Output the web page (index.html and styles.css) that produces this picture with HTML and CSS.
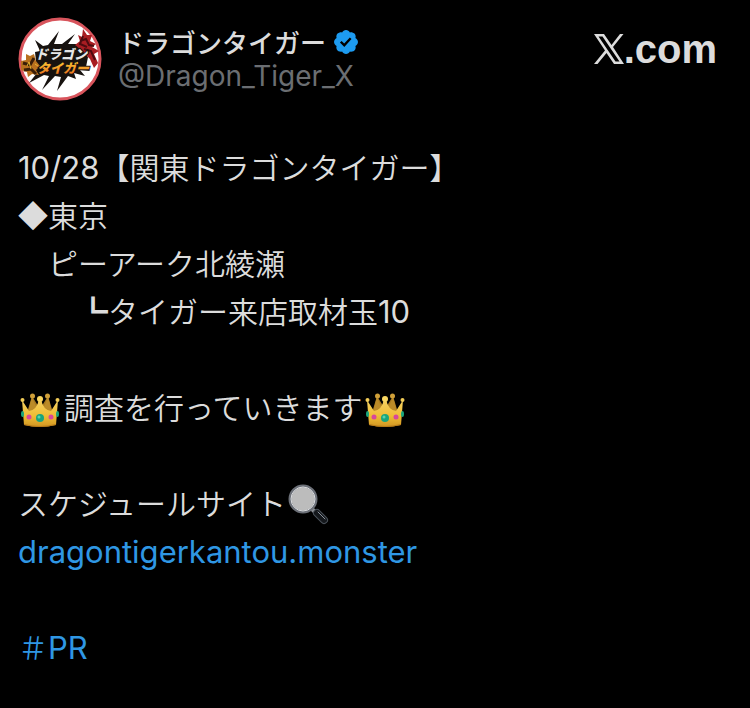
FILE: index.html
```html
<!DOCTYPE html>
<html lang="ja">
<head>
    <meta charset="UTF-8">
    <meta name="viewport" content="width=device-width, initial-scale=1.0">
    <title>ドラゴンタイガー</title>
    <link rel="stylesheet" href="styles.css">
</head>
<body>
    <!-- shared emoji shapes -->
    <svg class="defs" width="0" height="0" aria-hidden="true">
        <defs>
            <linearGradient id="gold" x1="0" y1="0" x2="0" y2="1">
                <stop offset="0" stop-color="#f6d264"/>
                <stop offset="0.6" stop-color="#efbd35"/>
                <stop offset="1" stop-color="#d09522"/>
            </linearGradient>
            <linearGradient id="fire" x1="0" y1="0" x2="0" y2="1">
                <stop offset="0" stop-color="#ffe03a"/>
                <stop offset="1" stop-color="#e8611a"/>
            </linearGradient>
            <symbol id="crown" viewBox="0 0 40 36">
                <path d="M6 24 12 4 20 17 28 4 34 24Z" fill="#a97b1f"/>
                <path d="M8 20 12 5l6 14M32 20 28 5l-6 14" fill="#bb8b28"/>
                <circle cx="12.500" cy="4" r="2.500" fill="#cf9f38"/>
                <circle cx="27.500" cy="4" r="2.500" fill="#cf9f38"/>
                <path d="M2 8 9 19q8-1 10-12h2q2 11 10 12l7-11-2 25q-16 4-32 0Z" fill="url(#gold)"/>
                <circle cx="20" cy="7" r="3" fill="#f9d762"/>
                <circle cx="2.500" cy="8" r="2" fill="#f3cd58"/>
                <circle cx="37.500" cy="8" r="2" fill="#f3cd58"/>
                <path d="M4 32q16 4 32 0v1q-16 4-32 0Z" fill="#b77a18"/>
                <circle cx="20" cy="26" r="4" fill="#19a57c"/>
                <circle cx="19" cy="25" r="1.500" fill="#58d3ac"/>
                <circle cx="9" cy="25" r="2.500" fill="#d8479b"/>
                <circle cx="31" cy="25" r="2.500" fill="#d8479b"/>
                <ellipse cx="2.500" cy="22" rx="1.500" ry="3" fill="#19a57c"/>
                <ellipse cx="37.500" cy="22" rx="1.500" ry="3" fill="#19a57c"/>
            </symbol>
        </defs>
    </svg>

    <main class="post">
        <header class="post-header">
            <svg class="avatar" viewBox="0 0 84 84" role="img" aria-label="ドラゴンタイガー">
                <circle cx="42" cy="42" r="40" fill="#fff" stroke="#d8545c" stroke-width="3"/>
                <path d="M17 23 25 29 30 28 41 14 36 27 44 27 57 17 50 27 60 27 70 40 68 50 72 54 62 53 67 59 56 56 58 62 50 59 39 74 43 60 37 59 24 73 31 59 26 58 11 66 19 56 9 51 18 44 17 35 22 34Z" fill="#17120f"/>
                <path d="M57 28 62 24 60 18 64 20 65 12 69 18 74 18 72 24 78 27 74 30 81 34 76 37 80 46 76 51 72 42 66 36 62 32Z" fill="#a81d22"/>
                <path d="M62 24 68 22 71 28 76 29M66 32 73 34 77 43M65 19 62 27 69 30" fill="none" stroke="#4d0b10" stroke-width="2"/>
                <path d="M3 44 8 43 8 37 12 39 16 37 18 44 22 49 18 53 21 58 14 57 10 60 9 55 3 53Z" fill="#b8711f"/>
                <path d="M5 46 12 48 16 41M6 53 13 52 18 57" fill="none" stroke="#3a1e08" stroke-width="3"/>
                <path d="M9 49 11 45 13 52M17 47 20 49" fill="none" stroke="#e9b52e"/>
                <g class="avatar-logo">
                    <text x="17" y="42" font-size="13" fill="#e6e6e6">ドラゴン</text>
                    <text x="19" y="56" font-size="13" fill="url(#fire)">タイガー</text>
                </g>
            </svg>

            <div class="author">
                <div class="author-name">
                    <span>ドラゴンタイガー</span>
                    <svg class="badge" viewBox="0 0 22 22" role="img" aria-label="認証済み">
                        <path fill="#1d9bf0" d="M20.396 11c-.018-.646-.215-1.275-.57-1.816-.354-.54-.852-.972-1.438-1.246.223-.607.27-1.264.14-1.897-.131-.634-.437-1.218-.882-1.687-.47-.445-1.053-.75-1.687-.882-.633-.13-1.29-.083-1.897.14-.273-.587-.704-1.086-1.245-1.44S11.647 1.620 11 1.604c-.646.017-1.273.213-1.813.568s-.969.854-1.240 1.440c-.608-.223-1.267-.272-1.902-.14-.635.130-1.220.436-1.690.882-.445.470-.749 1.055-.878 1.688-.130.633-.080 1.290.144 1.896-.587.274-1.087.705-1.443 1.245-.356.540-.555 1.170-.574 1.817.020.647.218 1.276.574 1.817.356.540.856.972 1.443 1.245-.224.606-.274 1.263-.144 1.896.130.634.433 1.218.877 1.688.470.443 1.054.747 1.687.878.633.132 1.290.084 1.897-.136.274.586.705 1.084 1.246 1.439.540.354 1.170.551 1.816.569.647-.016 1.276-.213 1.817-.567s.972-.854 1.245-1.440c.604.239 1.266.296 1.903.164.636-.132 1.220-.447 1.680-.907.460-.460.776-1.044.908-1.681s.075-1.299-.165-1.903c.586-.274 1.084-.705 1.439-1.246.354-.540.551-1.170.569-1.816z"/>
                        <path fill="#000" d="M9.662 14.850l-3.429-3.428 1.293-1.302 2.072 2.072 4.400-4.794 1.347 1.246z"/>
                    </svg>
                </div>
                <div class="author-handle">@Dragon_Tiger_X</div>
            </div>

            <div class="brand">
                <svg class="brand-x" viewBox="0 0 30 30" role="img" aria-label="X">
                    <path fill="#dcdcdc" fill-rule="evenodd" d="M0 0H10L17.500 11 26 0H29.500L19 13 30 30H20L12.500 19 3.500 30H0L11 16.500ZM4.500 2.500 21.500 27.500H25.500L8.500 2.500Z"/>
                </svg>
                <span>.com</span>
            </div>
        </header>

        <div class="post-body">
            <p><span class="latin">10/28</span>【関東ドラゴンタイガー】</p>
            <p>◆東京</p>
            <p>　ピーアーク北綾瀬</p>
            <p>　　┗タイガー来店取材玉<span class="latin">10</span></p>
            <br>
            <p><svg class="crown" role="img" aria-label="王冠"><use href="#crown"/></svg>調査を行っていきます<svg class="crown" role="img" aria-label="王冠"><use href="#crown"/></svg></p>
            <br>
            <p>スケジュールサイト<svg class="lens" viewBox="0 0 42 42" role="img" aria-label="虫眼鏡">
                    <path d="M25 26 31 32" stroke="#8b8f94" stroke-width="4"/>
                    <path d="M30 30 37 37" stroke="#4b525a" stroke-width="8" stroke-linecap="round"/>
                    <path d="M30 30 37 37" stroke="#15181c" stroke-width="6" stroke-linecap="round"/>
                    <path d="M31 29 38 36" stroke="#8a929b" stroke-linecap="round"/>
                    <circle cx="16" cy="16" r="13" fill="#bcbcbc" stroke="#6c7078" stroke-width="3"/>
                    <circle cx="16" cy="16" r="12" fill="none" stroke="#d9dbde"/>
                </svg></p>
            <p><a href="#" class="latin">dragontigerkantou.monster</a></p>
            <br>
            <p><a href="#">＃<span class="latin">PR</span></a></p>
        </div>
    </main>
</body>
</html>
```
FILE: styles.css
```css
* {
    box-sizing: border-box;
}

body {
    margin: 0;
    background: #000;
    color: #dcdcdc;
    font-family: "Noto Sans CJK JP", sans-serif;
}

.defs {
    position: absolute;
}

.post {
    padding: 17px 33px 36px 18px;
}

.post-header {
    display: flex;
    align-items: flex-start;
    margin-bottom: 41px;
}

.avatar {
    width: 84px;
    height: 84px;
    flex-shrink: 0;
}

.avatar-logo {
    font-weight: 900;
    font-style: italic;
    stroke: #17120f;
    stroke-width: 2px;
    paint-order: stroke;
}

.author {
    margin-left: 16px;
    padding-top: 8px;
    line-height: 34px;
}

.author-name {
    display: flex;
    align-items: center;
    gap: 6px;
    font-size: 26px;
    font-weight: 500;
}

.badge {
    width: 28px;
    height: 28px;
}

.author-handle {
    color: #6b6e72;
    font-family: Inter, sans-serif;
    font-size: 28px;
}

.brand {
    display: flex;
    align-items: center;
    margin-left: auto;
    padding-top: 10px;
    font-family: "Liberation Sans", Arial, sans-serif;
    font-size: 40px;
    font-weight: bold;
    line-height: 44px;
}

.brand-x {
    width: 30px;
    height: 30px;
}

.post-body {
    font-size: 30px;
    font-weight: 350;
    line-height: 48px;
}

.post-body p {
    margin: 0;
}

.latin {
    font-family: Inter, sans-serif;
    font-size: 31px;
    font-weight: 400;
    line-height: 1;
}

.post-body a {
    color: #2f97e4;
    text-decoration: none;
}

.crown {
    width: 40px;
    height: 36px;
    margin: 0 4px 0 2px;
    vertical-align: -9px;
}

.lens {
    width: 42px;
    height: 42px;
    margin-left: 1px;
    vertical-align: -10px;
}
```
